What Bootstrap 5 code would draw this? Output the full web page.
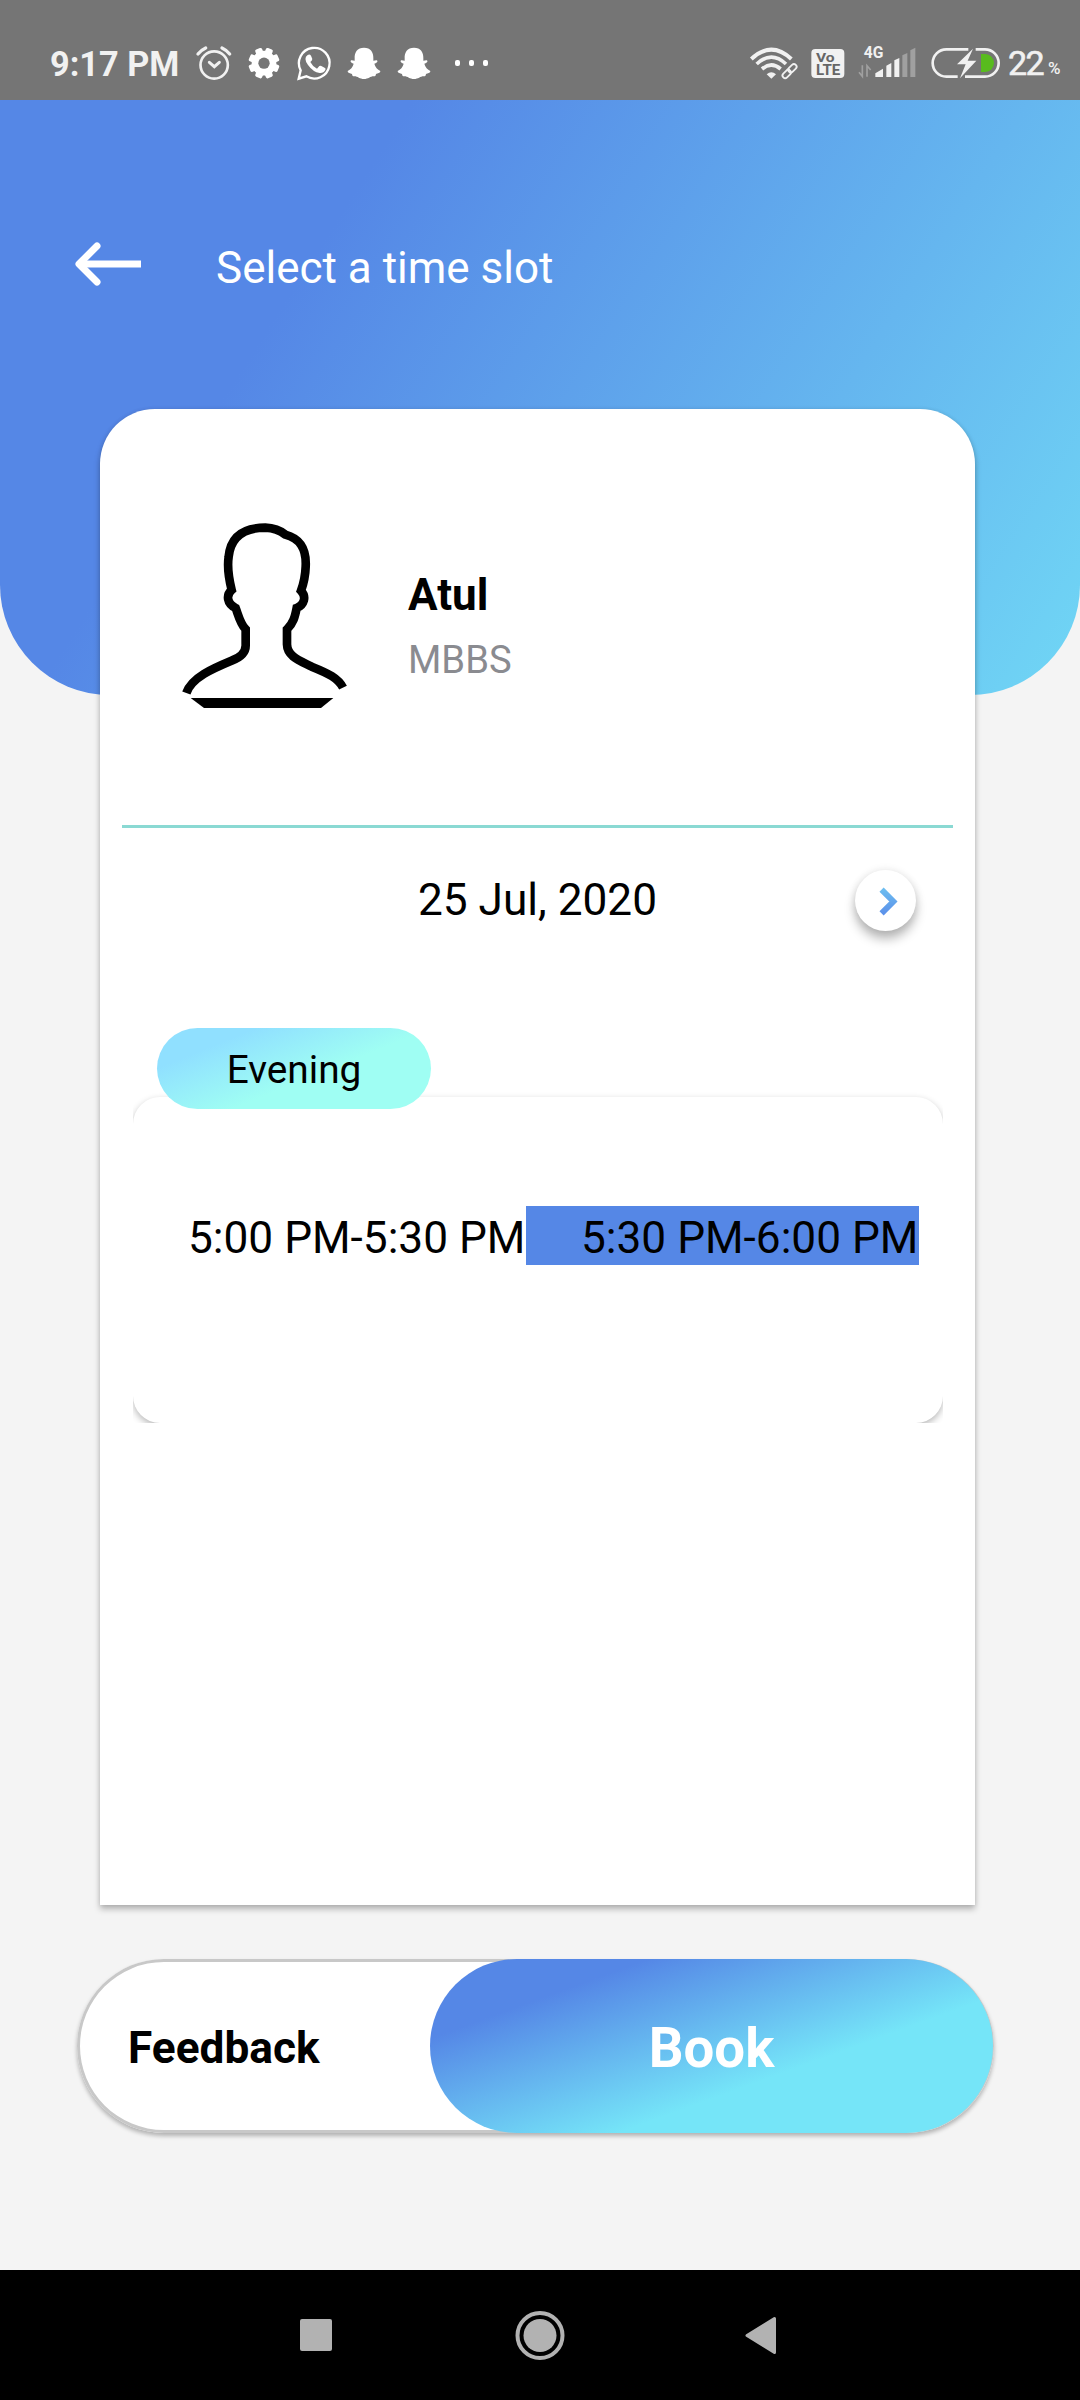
<!DOCTYPE html>
<html lang="en">
<head>
<meta charset="utf-8">
<meta name="viewport" content="width=device-width, initial-scale=1">
<title>Select a time slot</title>
<link href="https://cdn.jsdelivr.net/npm/bootstrap@5.3.0/dist/css/bootstrap.min.css" rel="stylesheet">
<style>
  body { font-family: Roboto, "Liberation Sans", sans-serif; background: #f4f4f4; color: #000; width: 1080px; height: 2400px; overflow: hidden; }
  svg { display: block; flex: none; }
  .status-bar { height: 100px; background: #757575; color: #f1f1f1; flex: none; }
  .clock { width: 139px; margin-left: 50px; font-size: 34.3px; font-weight: 700; line-height: 40px; padding-top: 44px; white-space: nowrap; }
  .battery-text { font-size: 34px; font-weight: 400; -webkit-text-stroke: .6px #f1f1f1; line-height: 40px; padding-top: 43px; width: 40px; margin-left: 4px; letter-spacing: -1.5px; }
  .percent-sign { font-size: 17px; font-weight: 500; line-height: 20px; padding-top: 58px; width: 32px; }
  .hero { height: 595px; flex: none; border-radius: 0 0 110px 110px; background: linear-gradient(122.5deg, #5587e6 28.3%, #75e5f8 113%); }
  .hero-row { padding: 142px 0 0 75px; }
  .hero-title { font-size: 44px; line-height: 52px; margin-left: 74px; color: #fff; }
  .slot-card { width: 875px; height: 1496px; flex: none; margin: -286px 0 0 100px; border-radius: 55px 55px 0 0; box-shadow: 0 4px 6px rgba(0,0,0,.27), 0 0 4px rgba(0,0,0,.08); position: relative; }
  .doctor { height: 416px; padding: 111px 0 0 80px; flex: none; }
  .doctor-text { margin-left: 58px; padding-top: 48px; }
  .doctor-name { font-size: 44px; font-weight: 700; line-height: 54px; }
  .doctor-degree { font-size: 38.2px; line-height: 46px; margin-top: 15px; color: #8a8b90; }
  .divider { height: 3px; margin: 0 22px; background: #8ad9d3; flex: none; }
  .date-row { height: 145px; flex: none; }
  .date-label { font-size: 44.2px; line-height: 52px; text-align: center; padding-bottom: 2px; }
  .next-btn { right: 59px; width: 61px; height: 61px; top: 42px; background: #fff; box-shadow: 0 8px 11px rgba(0,0,0,.28), 0 0 9px rgba(0,0,0,.09); }
  .period { width: 274px; height: 81px; margin: 55px 0 0 57px; padding-top: 4px; border-radius: 41px; font-size: 38.8px; background: linear-gradient(158deg, #90e0ff 21%, #9ffef3 58%); position: relative; z-index: 2; flex: none; }
  .slot-clip { width: 810px; height: 338px; margin: -24px 0 0 33px; padding-top: 12px; overflow: hidden; flex: none; }
  .slot-panel { height: 326px; border-radius: 27px; background: #fff; padding-top: 109px; box-shadow: 0 3px 7px rgba(0,0,0,.28); }
  .slot-time { width: 393px; height: 59px; padding: 5px 0 0 55px; font-size: 44.2px; line-height: 55px; white-space: nowrap; }
  .slot-active { background: #5587e6; }
  .action-bar { width: 917px; height: 174px; flex: none; margin: 54px 0 0 77px; border-radius: 87px; background: #fff; box-shadow: inset 0 0 0 3px #c8c8c8, 0 3px 4px rgba(0,0,0,.27); }
  .feedback { width: 353px; height: 174px; padding: 3px 0 0 51px; font-size: 44.2px; font-weight: 700; line-height: 52px; }
  .book { width: 563px; height: 174px; border-radius: 87px; color: #fff; font-size: 54.6px; font-weight: 700; padding-top: 6px; background: linear-gradient(160deg, #5587e6 21%, #75e5f8 64%); }
  .nav-keys { height: 130px; background: #000; flex: none; padding-left: 300px; }
  .key-home { margin-left: 183px; }
  .key-back { margin-left: 179px; }
</style>
</head>
<body class="d-flex flex-column">
  <div class="status-bar d-flex">
    <div class="clock">9:17 PM</div>
    <!-- alarm -->
    <svg width="50" height="100" viewBox="566 -60 150 300" fill="none" stroke="#f1f1f1" stroke-width="8" stroke-linecap="round"><circle cx="641.500" cy="135" r="41"/><path d="M627 127l15 13 15-13" stroke-width="9"/><path d="M593 102q10-12 23-18M688 102q-10-12-23-18" stroke-width="10"/></svg>
    <!-- settings -->
    <svg width="50" height="100" viewBox="717 -60 150 300"><g fill="#fff"><circle cx="792" cy="129.500" r="37"/><rect x="781" y="83" width="22" height="93" rx="5" transform="rotate(22.500 792 129.500)"/><rect x="781" y="83" width="22" height="93" rx="5" transform="rotate(67.500 792 129.500)"/><rect x="781" y="83" width="22" height="93" rx="5" transform="rotate(112.500 792 129.500)"/><rect x="781" y="83" width="22" height="93" rx="5" transform="rotate(157.500 792 129.500)"/></g><circle cx="792" cy="129.500" r="17" fill="#757575"/></svg>
    <!-- chat with phone -->
    <svg width="50" height="100" viewBox="867 -60 150 300"><path d="M902 151A46 46 0 1 1 919 169L896 176z" fill="none" stroke="#fff" stroke-width="7"/><path d="M923 105q6-4 10 2l4 10q0 4-6 9 7 14 20 20l7-8q3-2 6 0l11 6q3 2 1 6-5 10-17 9-20-3-35-24-15-20-1-30z" fill="#fff"/></svg>
    <!-- ghosts -->
    <svg width="50" height="100" viewBox="1017 -60 150 300" fill="#fff"><path d="M1092 83c20 0 29 14 28 32l0 7c5 0 9-3 12 0 2 4-4 7-9 9 2 10 10 18 18 22 0 6-8 7-13 9-1 4-1 6-4 7-12-2-18 8-32 8s-20-10-32-8c-3-1-3-3-4-7-5-2-13-3-13-9 8-4 16-12 18-22-5-2-11-5-9-9 3-3 7 0 12 0l0-7c-1-18 8-32 28-32z"/></svg>
    <svg width="50" height="100" viewBox="1017 -60 150 300" fill="#fff"><path d="M1092 83c20 0 29 14 28 32l0 7c5 0 9-3 12 0 2 4-4 7-9 9 2 10 10 18 18 22 0 6-8 7-13 9-1 4-1 6-4 7-12-2-18 8-32 8s-20-10-32-8c-3-1-3-3-4-7-5-2-13-3-13-9 8-4 16-12 18-22-5-2-11-5-9-9 3-3 7 0 12 0l0-7c-1-18 8-32 28-32z"/></svg>
    <!-- more -->
    <svg width="50" height="100" viewBox="1317 -60 150 300" fill="#fff"><rect x="1365" y="120" width="15" height="18" rx="6"/><rect x="1407" y="120" width="15" height="18" rx="6"/><rect x="1449" y="120" width="15" height="18" rx="6"/></svg>
    <div class="ms-auto d-flex">
      <!-- wifi with link -->
      <svg width="58" height="100" viewBox="80 -60 174 300" fill="none" stroke="#f1f1f1"><path d="M93 117Q153 61 213 117" stroke-width="12"/><path d="M109 132Q153 91 197 132" stroke-width="11"/><path d="M125 147Q153 123 181 147" stroke-width="11"/><path d="M139 163q14-12 28 0l-14 13z" fill="#f1f1f1" stroke="none"/><g transform="rotate(-45 208 153)" stroke-width="5.500"><rect x="181" y="145" width="29" height="16" rx="8"/><rect x="205" y="145" width="29" height="16" rx="8"/></g></svg>
      <!-- VoLTE -->
      <svg width="47" height="100" viewBox="254 -60 141 300"><rect x="273" y="87" width="99" height="87" rx="12" fill="#f1f1f1"/><g fill="#666" font-family="Roboto, sans-serif" font-weight="700"><text x="287" y="125" font-size="41" textLength="56" lengthAdjust="spacingAndGlyphs">Vo</text><text x="287" y="165" font-size="43" textLength="73" lengthAdjust="spacingAndGlyphs">LTE</text></g></svg>
      <!-- 4G signal -->
      <svg width="72" height="100" viewBox="395 -60 216 300"><text x="430" y="115" font-size="48" font-weight="700" fill="#f1f1f1" font-family="Roboto, sans-serif" textLength="59" lengthAdjust="spacingAndGlyphs">4G</text><path d="M426 136v33l-10-12M440 170v-33l11 13" fill="none" stroke="#a0a0a0" stroke-width="5"/><path d="M465 160l23-14v25h-23zM498 137l15-8v42h-15zM522 121l15-7v57h-15z" fill="#f1f1f1"/><path d="M546 106l15-7v72h-15zM570 91l15-8v88h-15z" fill="#a0a0a0"/></svg>
      <!-- charging battery -->
      <svg width="80" height="100" viewBox="609 -60 240 300"><path d="M742 88h-66a41 41 0 0 0 0 82h34M764 88h28a41 41 0 0 1 0 82h-60" fill="none" stroke="#f1f1f1" stroke-width="8"/><path d="M780 102h13a26 27 0 0 1 0 54h-13z" fill="#58bb1e"/><path d="M756 86l-48 47h26l-17 42 49-53h-26z" fill="#f1f1f1"/></svg>
      <div class="battery-text">22</div><div class="percent-sign">%</div>
    </div>
  </div>

  <header class="hero">
    <div class="hero-row d-flex">
      <svg width="67" height="46" viewBox="0 0 67 46" fill="none" stroke="#fff"><path d="M66 22H5" stroke-width="7"/><path d="M22 4L4 22 22 40" stroke-width="7" stroke-linecap="round" stroke-linejoin="round"/></svg>
      <div class="hero-title">Select a time slot</div>
    </div>
  </header>

  <main class="slot-card bg-white d-flex flex-column">
    <div class="doctor d-flex">
      <svg width="170" height="190" viewBox="300 390 510 570" fill="none" stroke="#000" stroke-width="26"><path d="M319 909C335 862 400 835 455 812Q498 796 497 765V718C480 700 475 675 467 654C440 640 438 615 455 600C445 560 443 520 446 500C452 440 490 413 556 413Q592 414 616 434C660 446 680 475 677 530C676 560 671 580 663 602C680 620 673 645 650 654C645 680 640 700 621 718V763C622 800 660 812 695 830C745 850 775 865 789 893"/><path d="M332 924H760L723 954H372z" fill="#000" stroke="none"/></svg>
      <div class="doctor-text">
        <div class="doctor-name">Atul</div>
        <div class="doctor-degree">MBBS</div>
      </div>
    </div>
    <div class="divider"></div>
    <div class="date-row position-relative d-flex align-items-center justify-content-center">
      <div class="date-label">25 Jul, 2020</div>
      <button class="next-btn btn p-0 border-0 rounded-circle position-absolute" type="button" aria-label="Next day">
        <svg width="61" height="61" viewBox="0 0 62 62"><defs><linearGradient id="chevron" x1="0" y1="0" x2="0" y2="1"><stop offset="0" stop-color="#6cbcf0"/><stop offset="1" stop-color="#5c92ea"/></linearGradient></defs><path d="M27 20l12 12-12 12" fill="none" stroke="url(#chevron)" stroke-width="6"/></svg>
      </button>
    </div>
    <div class="period d-flex align-items-center justify-content-center">Evening</div>
    <div class="slot-clip">
      <div class="slot-panel d-flex">
        <div class="slot-time">5:00 PM-5:30 PM</div>
        <div class="slot-time slot-active">5:30 PM-6:00 PM</div>
      </div>
    </div>
  </main>

  <div class="action-bar d-flex">
    <div class="feedback d-flex align-items-center">Feedback</div>
    <div class="book d-flex align-items-center justify-content-center">Book</div>
  </div>

  <div class="nav-keys mt-auto d-flex align-items-center">
    <svg width="32" height="32"><rect width="32" height="32" rx="2" fill="#b2b2b2"/></svg>
    <svg class="key-home" width="50" height="50" viewBox="0 0 50 50"><circle cx="25" cy="25.500" r="22.500" fill="none" stroke="#b2b2b2" stroke-width="4"/><circle cx="25" cy="25.500" r="16.500" fill="#b2b2b2"/></svg>
    <svg class="key-back" width="33" height="38" viewBox="0 0 33 38"><path d="M3 19.500L30.500 2.500v34z" fill="#b2b2b2" stroke="#b2b2b2" stroke-width="3" stroke-linejoin="round"/></svg>
  </div>
<script src="https://cdn.jsdelivr.net/npm/bootstrap@5.3.0/dist/js/bootstrap.bundle.min.js"></script>
</body>
</html>
